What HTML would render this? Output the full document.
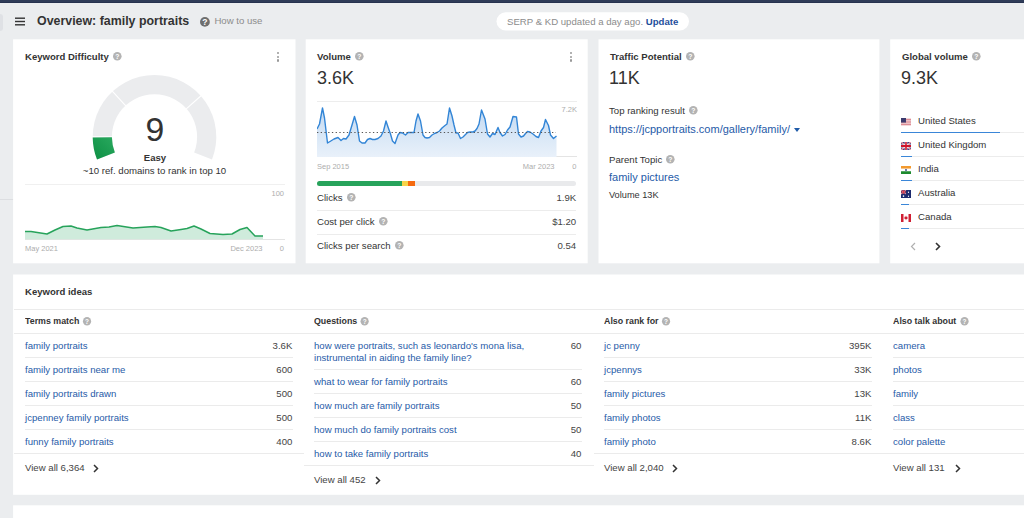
<!DOCTYPE html>
<html lang="en">
<head>
<meta charset="utf-8">
<title>Overview: family portraits</title>
<style>
*{box-sizing:border-box;margin:0;padding:0}
html,body{width:1024px;height:518px;overflow:hidden}
body{background:#ebedef;font-family:"Liberation Sans",Arial,sans-serif;color:#333;font-size:12px;position:relative}
.abs{position:absolute;white-space:nowrap}
.card{position:absolute}
.h1{font-size:12.4px;font-weight:bold;color:#333}
.ttl{font-size:9.55px;font-weight:bold;color:#333;transform:scaleX(1.0);transform-origin:0 50%}
.big{font-size:18px;color:#333}
.q{display:inline-block;border-radius:50%;color:#fff;font-size:7px;font-weight:bold;text-align:center;vertical-align:middle;position:relative}
.tiny{font-size:7.5px;color:#adadad}
.row{position:absolute;height:1px}
.kw{font-size:9.62px;color:#333;transform:scaleX(1.0);transform-origin:0 50%}
.num{font-size:9.62px;color:#444;text-align:right;transform:scaleX(1.0);transform-origin:100% 50%}
.ctr{transform-origin:50% 50%}
.th{font-size:9.3px;transform:scaleX(.95);transform-origin:0 50%}
.row2{position:absolute;height:1px;background:#ebebeb}
.link{color:#1f5ba8}
.dots{position:absolute;width:2px}
.dots i{display:block;width:2.2px;height:2.2px;background:#999;border-radius:50%;margin-bottom:1.5px}
</style>
</head>
<body>
<div class="abs" style="left:0;top:0;width:1024px;height:3px;background:linear-gradient(#2f3c58 0,#2f3c58 55%,#27334f 56%,#27334f 100%)"></div>
<div class="abs" style="left:0;top:14px;width:3px;height:17px;background:#dfe1e5;border-radius:0 3px 3px 0"></div>
<div class="abs" style="left:0;top:199px;width:14px;height:1px;background:#dcdee1"></div>

<svg class="abs" style="left:0;top:0" width="1024" height="518" viewBox="0 0 1024 518"><g fill="#fff"><rect x="13.100" y="39.300" width="282.400" height="224"/><rect x="305.700" y="39.300" width="282" height="224"/><rect x="598.500" y="39.300" width="280.900" height="224"/><rect x="890.200" y="39.300" width="140" height="224"/><rect x="13.100" y="274.500" width="1020" height="220.300"/><rect x="13.100" y="505.300" width="1020" height="20"/><rect x="496.500" y="12.200" width="192.500" height="18.300" rx="9.150"/></g></svg>

<svg class="abs" style="left:15px;top:16.500px" width="10" height="9" viewBox="0 0 10 9"><rect x="0" y="0.500" width="10" height="1.400" fill="#333"/><rect x="0" y="3.800" width="10" height="1.400" fill="#333"/><rect x="0" y="7.100" width="10" height="1.400" fill="#333"/></svg>
<div class="abs h1" style="left:37px;top:14.300px">Overview: family portraits</div>
<div class="abs kw" style="left:199.600px;top:15.200px;color:#8c8c8c"><svg width="9.8" height="9.8" viewBox="0 0 9.8 9.8" style="display:inline-block;vertical-align:middle;position:relative;top:-0.2px;margin-left:0px;overflow:visible"><circle cx="4.9" cy="4.9" r="4.9" fill="#6e6e6e"/><text x="4.9" y="8.00" font-size="8.6" font-weight="bold" fill="#fff" text-anchor="middle" font-family="Liberation Sans, Arial, sans-serif">?</text></svg><span style="margin-left:5px">How to use</span></div>
<div class="abs kw" style="left:507px;top:15.500px;color:#8c8c8c">SERP &amp; KD updated a day ago. <b style="color:#1f4f9c">Update</b></div>
<div class="card" style="left:14px;top:40px;width:281px;height:223px">
<div class="abs ttl" style="left:11px;top:11px">Keyword Difficulty<svg width="8.6" height="8.6" viewBox="0 0 8.6 8.6" style="display:inline-block;vertical-align:middle;position:relative;top:-0.8px;margin-left:4px;overflow:visible"><circle cx="4.3" cy="4.3" r="4.3" fill="#b3b3b3"/><text x="4.3" y="6.75" font-size="6.8" font-weight="bold" fill="#fff" text-anchor="middle" font-family="Liberation Sans, Arial, sans-serif">?</text></svg></div>
<div class="dots" style="left:263px;top:12px"><i></i><i></i><i></i></div>
<svg class="abs" style="left:0;top:0" width="281" height="140" viewBox="0 0 281 140"><defs><linearGradient id="gg" x1="0" y1="1" x2="1" y2="0"><stop offset="0" stop-color="#0c8f43"/><stop offset="1" stop-color="#2aa95f"/></linearGradient></defs><path d="M83.00 119.45A61.8 61.8 0 1 1 198.00 119.45L180.14 112.41A42.6 42.6 0 1 0 100.86 112.41Z" fill="#ebecee"/><line x1="77.70" y1="96.80" x2="98.90" y2="96.80" stroke="#fff" stroke-width="1.1"/><line x1="97.83" y1="50.72" x2="112.24" y2="66.28" stroke="#fff" stroke-width="1.1"/><line x1="187.61" y1="55.27" x2="171.70" y2="69.29" stroke="#fff" stroke-width="1.1"/><path d="M83.00 119.45A61.8 61.8 0 0 1 78.70 97.45L97.90 97.25A42.6 42.6 0 0 0 100.86 112.41Z" fill="url(#gg)"/></svg>
<div class="abs" style="left:100.500px;width:81px;top:70.200px;text-align:center;font-size:33.75px;color:#333">9</div>
<div class="abs ttl ctr" style="left:100.500px;width:81px;top:111.700px;text-align:center">Easy</div>
<div class="abs kw ctr" style="left:0;width:281px;top:124.500px;text-align:center">~10 ref. domains to rank in top 10</div>
<div class="row" style="left:11px;top:144px;width:259.5px;background:#f0f0f0"></div>
<div class="row" style="left:11px;top:199px;width:259.5px;background:#e4e4e4"></div>
<svg class="abs" style="left:11px;top:145.700px" width="240" height="54" viewBox="0 0 240 54"><path d="M0 45.5 L6 45.5 L22 48 L30 44 L38 40.5 L46 40 L52 42 L62 44 L76 41.5 L84 41 L92 39.5 L108 42 L122 41 L130 40.5 L136 41.5 L146 45 L156 43.5 L162 42.5 L169 40 L176 43 L185 47.5 L198 48.5 L207 48 L215 43.5 L222 41.5 L230 50 L238 50L238 53.300L0 53.300Z" fill="#cfebdc"/><path d="M0 45.5 L6 45.5 L22 48 L30 44 L38 40.5 L46 40 L52 42 L62 44 L76 41.5 L84 41 L92 39.5 L108 42 L122 41 L130 40.5 L136 41.5 L146 45 L156 43.5 L162 42.5 L169 40 L176 43 L185 47.5 L198 48.5 L207 48 L215 43.5 L222 41.5 L230 50 L238 50" fill="none" stroke="#27a35b" stroke-width="1.500" stroke-linejoin="round"/></svg>
<div class="abs tiny" style="right:11px;top:148.500px">100</div>
<div class="abs tiny" style="left:11px;top:203.500px">May 2021</div>
<div class="abs tiny" style="right:32.500px;top:203.500px">Dec 2023</div>
<div class="abs tiny" style="right:11px;top:203.500px">0</div>
</div>
<div class="card" style="left:307px;top:40px;width:280px;height:223px">
<div class="abs ttl" style="left:10px;top:11px">Volume<svg width="8.6" height="8.6" viewBox="0 0 8.6 8.6" style="display:inline-block;vertical-align:middle;position:relative;top:-0.8px;margin-left:4px;overflow:visible"><circle cx="4.3" cy="4.3" r="4.3" fill="#b3b3b3"/><text x="4.3" y="6.75" font-size="6.8" font-weight="bold" fill="#fff" text-anchor="middle" font-family="Liberation Sans, Arial, sans-serif">?</text></svg></div>
<div class="dots" style="left:263px;top:12px"><i></i><i></i><i></i></div>
<div class="abs big" style="left:10px;top:28px">3.6K</div>
<div class="row" style="left:10px;top:61px;width:259.5px;background:#ededed"></div>
<div class="row" style="left:10px;top:116px;width:259.5px;background:#e4e4e4"></div>
<svg class="abs" style="left:10px;top:60px" width="240" height="57" viewBox="0 0 240 57"><defs><linearGradient id="vg" x1="0" y1="0" x2="0" y2="1"><stop offset="0" stop-color="#c3daf2"/><stop offset="1" stop-color="#e9f1fa"/></linearGradient></defs><path d="M0 29 L2.5 24 L5.5 8 L7.5 18 L10.5 43 L13 41.5 L17 39 L21 37.5 L24 40.5 L26.5 38.5 L29 39 L32 35 L35 25 L37.5 16.5 L40 25 L42.5 41 L45 43 L48 43 L50.5 39.5 L53 38.5 L55.5 39.5 L58 39.5 L61 38.5 L64 36 L66.5 31 L69 21 L71 27 L73.5 34 L75.5 41 L78 43.5 L81 35 L83 32.5 L85.5 33 L88.5 35 L91 32.5 L94 32.5 L97 32.5 L99 21 L101 14 L103.5 21 L106 35 L108 37.5 L110 38 L112.5 37.5 L115 35 L117.5 33.5 L120 32.5 L122.5 31 L125 28 L128 25.5 L130 24 L132.5 8 L135 16 L137 25 L139 33 L141 33 L143.5 38.5 L146 37 L148 35 L150.5 32.5 L153 32 L156 32 L158 31 L160 28.5 L162 24 L164.5 10 L168 19 L170.5 34 L173 37 L175.5 33.5 L178 34.5 L181 27.5 L183 32.5 L185.5 36 L188 34.5 L190.5 30 L193 27 L196 16.5 L199.5 17 L201.5 34 L204 37 L206.5 36 L208.5 33.5 L210.5 31.5 L213 32 L216 34 L219 36.5 L221.5 37.5 L224 31 L226.5 27.5 L228.5 19.5 L231.5 25.5 L233.5 35 L236.5 38.5 L239.5 36L239.500 57L0 57Z" fill="url(#vg)"/><path d="M0 29 L2.5 24 L5.5 8 L7.5 18 L10.5 43 L13 41.5 L17 39 L21 37.5 L24 40.5 L26.5 38.5 L29 39 L32 35 L35 25 L37.5 16.5 L40 25 L42.5 41 L45 43 L48 43 L50.5 39.5 L53 38.5 L55.5 39.5 L58 39.5 L61 38.5 L64 36 L66.5 31 L69 21 L71 27 L73.5 34 L75.5 41 L78 43.5 L81 35 L83 32.5 L85.5 33 L88.5 35 L91 32.5 L94 32.5 L97 32.5 L99 21 L101 14 L103.5 21 L106 35 L108 37.5 L110 38 L112.5 37.5 L115 35 L117.5 33.5 L120 32.5 L122.5 31 L125 28 L128 25.5 L130 24 L132.5 8 L135 16 L137 25 L139 33 L141 33 L143.5 38.5 L146 37 L148 35 L150.5 32.5 L153 32 L156 32 L158 31 L160 28.5 L162 24 L164.5 10 L168 19 L170.5 34 L173 37 L175.5 33.5 L178 34.5 L181 27.5 L183 32.5 L185.5 36 L188 34.5 L190.5 30 L193 27 L196 16.5 L199.5 17 L201.5 34 L204 37 L206.5 36 L208.5 33.5 L210.5 31.5 L213 32 L216 34 L219 36.5 L221.5 37.5 L224 31 L226.5 27.5 L228.5 19.5 L231.5 25.5 L233.5 35 L236.5 38.5 L239.5 36" fill="none" stroke="#3285d6" stroke-width="1.400" stroke-linejoin="round"/><line x1="0" y1="32.500" x2="239" y2="32.500" stroke="#555" stroke-width="1" stroke-dasharray="1.300 2.430"/></svg>
<div class="abs tiny" style="right:10px;top:65px">7.2K</div>
<div class="abs tiny" style="left:10px;top:121.500px">Sep 2015</div>
<div class="abs tiny" style="right:32.500px;top:121.500px">Mar 2023</div>
<div class="abs tiny" style="right:10.500px;top:121.500px">0</div>
<div class="abs" style="left:10px;top:141px;width:259px;height:5px;border-radius:3px;background:#e9eaec;overflow:hidden"><div class="abs" style="left:0;top:0;width:86px;height:5px;background:#27a35b"></div><div class="abs" style="left:85px;top:0;width:6px;height:5px;background:#f7d34a"></div><div class="abs" style="left:91px;top:0;width:7px;height:5px;background:#f56a0f"></div></div>
<div class="abs kw " style="left:10px;top:152px;">Clicks<svg width="8.6" height="8.6" viewBox="0 0 8.6 8.6" style="display:inline-block;vertical-align:middle;position:relative;top:-0.8px;margin-left:4px;overflow:visible"><circle cx="4.3" cy="4.3" r="4.3" fill="#b3b3b3"/><text x="4.3" y="6.75" font-size="6.8" font-weight="bold" fill="#fff" text-anchor="middle" font-family="Liberation Sans, Arial, sans-serif">?</text></svg></div>
<div class="abs num" style="left:189.2px;width:80px;top:152px">1.9K</div>
<div class="row" style="left:10px;top:170px;width:259px;background:#ececec"></div>
<div class="abs kw " style="left:10px;top:176px;">Cost per click<svg width="8.6" height="8.6" viewBox="0 0 8.6 8.6" style="display:inline-block;vertical-align:middle;position:relative;top:-0.8px;margin-left:4px;overflow:visible"><circle cx="4.3" cy="4.3" r="4.3" fill="#b3b3b3"/><text x="4.3" y="6.75" font-size="6.8" font-weight="bold" fill="#fff" text-anchor="middle" font-family="Liberation Sans, Arial, sans-serif">?</text></svg></div>
<div class="abs num" style="left:189.2px;width:80px;top:176px">$1.20</div>
<div class="row" style="left:10px;top:194px;width:259px;background:#ececec"></div>
<div class="abs kw " style="left:10px;top:200px;">Clicks per search<svg width="8.6" height="8.6" viewBox="0 0 8.6 8.6" style="display:inline-block;vertical-align:middle;position:relative;top:-0.8px;margin-left:4px;overflow:visible"><circle cx="4.3" cy="4.3" r="4.3" fill="#b3b3b3"/><text x="4.3" y="6.75" font-size="6.8" font-weight="bold" fill="#fff" text-anchor="middle" font-family="Liberation Sans, Arial, sans-serif">?</text></svg></div>
<div class="abs num" style="left:189.2px;width:80px;top:200px">0.54</div>
</div>
<div class="card" style="left:599px;top:40px;width:280px;height:223px">
<div class="abs ttl" style="left:11px;top:11px">Traffic Potential<svg width="8.6" height="8.6" viewBox="0 0 8.6 8.6" style="display:inline-block;vertical-align:middle;position:relative;top:-0.8px;margin-left:4px;overflow:visible"><circle cx="4.3" cy="4.3" r="4.3" fill="#b3b3b3"/><text x="4.3" y="6.75" font-size="6.8" font-weight="bold" fill="#fff" text-anchor="middle" font-family="Liberation Sans, Arial, sans-serif">?</text></svg></div>
<div class="abs big" style="left:10px;top:28px">11K</div>
<div class="abs kw " style="left:10px;top:65px;">Top ranking result<svg width="8.6" height="8.6" viewBox="0 0 8.6 8.6" style="display:inline-block;vertical-align:middle;position:relative;top:-0.8px;margin-left:4px;overflow:visible"><circle cx="4.3" cy="4.3" r="4.3" fill="#b3b3b3"/><text x="4.3" y="6.75" font-size="6.8" font-weight="bold" fill="#fff" text-anchor="middle" font-family="Liberation Sans, Arial, sans-serif">?</text></svg></div>
<div class="abs link" style="left:10px;top:82.500px;font-size:11px">https://jcpportraits.com/gallery/family/ <span style="display:inline-block;width:0;height:0;border-left:3.200px solid transparent;border-right:3.200px solid transparent;border-top:4px solid #1f5ba8;vertical-align:middle;margin-left:1px"></span></div>
<div class="abs kw " style="left:10px;top:113.5px;">Parent Topic<svg width="8.6" height="8.6" viewBox="0 0 8.6 8.6" style="display:inline-block;vertical-align:middle;position:relative;top:-0.8px;margin-left:4px;overflow:visible"><circle cx="4.3" cy="4.3" r="4.3" fill="#b3b3b3"/><text x="4.3" y="6.75" font-size="6.8" font-weight="bold" fill="#fff" text-anchor="middle" font-family="Liberation Sans, Arial, sans-serif">?</text></svg></div>
<div class="abs link" style="left:10px;top:131.400px;font-size:11px">family pictures</div>
<div class="abs" style="left:10px;top:150.400px;font-size:9.2px;color:#333">Volume 13K</div>
</div>
<div class="card" style="left:891px;top:40px;width:140px;height:223px">
<div class="abs ttl" style="left:11px;top:11px">Global volume<svg width="8.6" height="8.6" viewBox="0 0 8.6 8.6" style="display:inline-block;vertical-align:middle;position:relative;top:-0.8px;margin-left:4px;overflow:visible"><circle cx="4.3" cy="4.3" r="4.3" fill="#b3b3b3"/><text x="4.3" y="6.75" font-size="6.8" font-weight="bold" fill="#fff" text-anchor="middle" font-family="Liberation Sans, Arial, sans-serif">?</text></svg></div>
<div class="abs big" style="left:10px;top:28px">9.3K</div>
<div class="abs kw " style="left:27px;top:75px;">United States</div>
<div class="row" style="left:10px;top:92px;width:130px;background:#ececec"></div>
<div class="abs" style="left:10px;top:91.7px;width:99px;height:1.400px;background:#3a86d8"></div>
<svg class="abs" style="left:10px;top:77.9px" width="10" height="8" viewBox="0 0 10 7" preserveAspectRatio="none"><rect width="10" height="7" fill="#f3d9dc"/><rect y="1" width="10" height="1" fill="#d9808a"/><rect y="3" width="10" height="1" fill="#d9808a"/><rect y="5" width="10" height="1" fill="#d9808a"/><rect width="5" height="4" fill="#3c3b6e"/></svg>
<div class="abs kw " style="left:27px;top:99px;">United Kingdom</div>
<div class="row" style="left:10px;top:116px;width:130px;background:#ececec"></div>
<div class="abs" style="left:10px;top:115.7px;width:10.8px;height:1.400px;background:#3a86d8"></div>
<svg class="abs" style="left:10px;top:101.9px" width="10" height="8" viewBox="0 0 10 7" preserveAspectRatio="none"><rect width="10" height="7" fill="#2b3a80"/><path d="M0 0L10 7M10 0L0 7" stroke="#e8a0a8" stroke-width="1.400"/><path d="M5 0V7M0 3.500H10" stroke="#fff" stroke-width="2.600"/><path d="M5 0V7M0 3.500H10" stroke="#cf142b" stroke-width="1.600"/></svg>
<div class="abs kw " style="left:27px;top:123px;">India</div>
<div class="row" style="left:10px;top:140px;width:130px;background:#ececec"></div>
<div class="abs" style="left:10px;top:139.7px;width:10.5px;height:1.400px;background:#3a86d8"></div>
<svg class="abs" style="left:10px;top:125.9px" width="10" height="8" viewBox="0 0 10 7" preserveAspectRatio="none"><rect width="10" height="2.400" fill="#f39a2e"/><rect y="2.400" width="10" height="2.200" fill="#fff"/><rect y="4.600" width="10" height="2.400" fill="#1d8a2e"/><circle cx="5" cy="3.500" r="0.900" fill="#2b3a80"/></svg>
<div class="abs kw " style="left:27px;top:147px;">Australia</div>
<div class="row" style="left:10px;top:164px;width:130px;background:#ececec"></div>
<div class="abs" style="left:10px;top:163.7px;width:8.3px;height:1.400px;background:#3a86d8"></div>
<svg class="abs" style="left:10px;top:149.9px" width="10" height="8" viewBox="0 0 10 7" preserveAspectRatio="none"><rect width="10" height="7" fill="#1c2a6e"/><path d="M0 0L5 3.500M5 0L0 3.500" stroke="#e58a95" stroke-width="0.900"/><path d="M2.500 0V3.500M0 1.750H5" stroke="#d8394a" stroke-width="0.900"/><circle cx="7.500" cy="2" r="0.600" fill="#fff"/><circle cx="7.500" cy="5.500" r="0.600" fill="#fff"/><circle cx="2.500" cy="5.300" r="0.800" fill="#fff"/></svg>
<div class="abs kw " style="left:27px;top:171px;">Canada</div>
<div class="row" style="left:10px;top:188px;width:130px;background:#ececec"></div>
<div class="abs" style="left:10px;top:187.7px;width:8.3px;height:1.400px;background:#3a86d8"></div>
<svg class="abs" style="left:10px;top:173.9px" width="10" height="8" viewBox="0 0 10 7" preserveAspectRatio="none"><rect width="10" height="7" fill="#fff"/><rect width="2.500" height="7" fill="#cf1f33"/><rect x="7.500" width="2.500" height="7" fill="#cf1f33"/><path d="M5 1.300L5.700 2.600L6.700 2.500L6.300 3.700L6.800 4.200L5.300 4.700L5 5.700L4.700 4.700L3.200 4.200L3.700 3.700L3.300 2.500L4.300 2.600Z" fill="#cf1f33"/></svg>
<svg class="abs" style="left:19px;top:201.5px" width="6" height="9" viewBox="0 0 6 9"><path d="M5 1L1.5 4.500L5 8" fill="none" stroke="#b0b0b0" stroke-width="1.2"/></svg>
<svg class="abs" style="left:44px;top:201.5px" width="6" height="9" viewBox="0 0 6 9"><path d="M1 1L4.500 4.500L1 8" fill="none" stroke="#333" stroke-width="1.6"/></svg>
</div>
<div class="card" style="left:14px;top:275.500px;width:1020px;height:219px">
<div class="abs ttl" style="left:11px;top:10px">Keyword ideas</div>
<div class="row2" style="left:0px;top:33px;width:1020px"></div>
<div class="abs ttl th" style="left:11px;top:40.7px">Terms match<svg width="8.6" height="8.6" viewBox="0 0 8.6 8.6" style="display:inline-block;vertical-align:middle;position:relative;top:-0.8px;margin-left:4px;overflow:visible"><circle cx="4.3" cy="4.3" r="4.3" fill="#b3b3b3"/><text x="4.3" y="6.75" font-size="6.8" font-weight="bold" fill="#fff" text-anchor="middle" font-family="Liberation Sans, Arial, sans-serif">?</text></svg></div>
<div class="row2" style="left:0px;top:57px;width:290px"></div>
<div class="abs kw link" style="left:11px;top:64px;">family portraits</div>
<div class="abs num" style="left:198.39999999999998px;width:80px;top:64px">3.6K</div>
<div class="row2" style="left:11px;top:81px;width:268px"></div>
<div class="abs kw link" style="left:11px;top:88px;">family portraits near me</div>
<div class="abs num" style="left:198.39999999999998px;width:80px;top:88px">600</div>
<div class="row2" style="left:11px;top:105px;width:268px"></div>
<div class="abs kw link" style="left:11px;top:112px;">family portraits drawn</div>
<div class="abs num" style="left:198.39999999999998px;width:80px;top:112px">500</div>
<div class="row2" style="left:11px;top:129px;width:268px"></div>
<div class="abs kw link" style="left:11px;top:136px;">jcpenney family portraits</div>
<div class="abs num" style="left:198.39999999999998px;width:80px;top:136px">500</div>
<div class="row2" style="left:11px;top:153px;width:268px"></div>
<div class="abs kw link" style="left:11px;top:160px;">funny family portraits</div>
<div class="abs num" style="left:198.39999999999998px;width:80px;top:160px">400</div>
<div class="row2" style="left:0px;top:177px;width:290px"></div>
<div class="abs kw " style="left:11px;top:186.6px;color:#444;">View all 6,364</div>
<svg class="abs" style="left:79px;top:188px" width="6" height="9" viewBox="0 0 6 9"><path d="M1 1L4.500 4.500L1 8" fill="none" stroke="#333" stroke-width="1.5"/></svg>
<div class="abs ttl th" style="left:300px;top:40.7px">Questions<svg width="8.6" height="8.6" viewBox="0 0 8.6 8.6" style="display:inline-block;vertical-align:middle;position:relative;top:-0.8px;margin-left:4px;overflow:visible"><circle cx="4.3" cy="4.3" r="4.3" fill="#b3b3b3"/><text x="4.3" y="6.75" font-size="6.8" font-weight="bold" fill="#fff" text-anchor="middle" font-family="Liberation Sans, Arial, sans-serif">?</text></svg></div>
<div class="row2" style="left:290px;top:57px;width:290px"></div>
<div class="abs kw link" style="left:300px;top:64px;line-height:12px;">how were portraits, such as leonardo's mona lisa,<br>instrumental in aiding the family line?</div>
<div class="abs num" style="left:487.4px;width:80px;top:64px">60</div>
<div class="row2" style="left:300px;top:93px;width:268px"></div>
<div class="abs kw link" style="left:300px;top:100px;">what to wear for family portraits</div>
<div class="abs num" style="left:487.4px;width:80px;top:100px">60</div>
<div class="row2" style="left:300px;top:117px;width:268px"></div>
<div class="abs kw link" style="left:300px;top:124px;">how much are family portraits</div>
<div class="abs num" style="left:487.4px;width:80px;top:124px">50</div>
<div class="row2" style="left:300px;top:141px;width:268px"></div>
<div class="abs kw link" style="left:300px;top:148px;">how much do family portraits cost</div>
<div class="abs num" style="left:487.4px;width:80px;top:148px">50</div>
<div class="row2" style="left:300px;top:165px;width:268px"></div>
<div class="abs kw link" style="left:300px;top:172px;">how to take family portraits</div>
<div class="abs num" style="left:487.4px;width:80px;top:172px">40</div>
<div class="row2" style="left:290px;top:189px;width:290px"></div>
<div class="abs kw " style="left:300px;top:198.6px;color:#444;">View all 452</div>
<svg class="abs" style="left:361px;top:200px" width="6" height="9" viewBox="0 0 6 9"><path d="M1 1L4.500 4.500L1 8" fill="none" stroke="#333" stroke-width="1.5"/></svg>
<div class="abs ttl th" style="left:590px;top:40.7px">Also rank for<svg width="8.6" height="8.6" viewBox="0 0 8.6 8.6" style="display:inline-block;vertical-align:middle;position:relative;top:-0.8px;margin-left:4px;overflow:visible"><circle cx="4.3" cy="4.3" r="4.3" fill="#b3b3b3"/><text x="4.3" y="6.75" font-size="6.8" font-weight="bold" fill="#fff" text-anchor="middle" font-family="Liberation Sans, Arial, sans-serif">?</text></svg></div>
<div class="row2" style="left:580px;top:57px;width:290px"></div>
<div class="abs kw link" style="left:590px;top:64px;">jc penny</div>
<div class="abs num" style="left:777.4px;width:80px;top:64px">395K</div>
<div class="row2" style="left:590px;top:81px;width:268px"></div>
<div class="abs kw link" style="left:590px;top:88px;">jcpennys</div>
<div class="abs num" style="left:777.4px;width:80px;top:88px">33K</div>
<div class="row2" style="left:590px;top:105px;width:268px"></div>
<div class="abs kw link" style="left:590px;top:112px;">family pictures</div>
<div class="abs num" style="left:777.4px;width:80px;top:112px">13K</div>
<div class="row2" style="left:590px;top:129px;width:268px"></div>
<div class="abs kw link" style="left:590px;top:136px;">family photos</div>
<div class="abs num" style="left:777.4px;width:80px;top:136px">11K</div>
<div class="row2" style="left:590px;top:153px;width:268px"></div>
<div class="abs kw link" style="left:590px;top:160px;">family photo</div>
<div class="abs num" style="left:777.4px;width:80px;top:160px">8.6K</div>
<div class="row2" style="left:580px;top:177px;width:290px"></div>
<div class="abs kw " style="left:590px;top:186.6px;color:#444;">View all 2,040</div>
<svg class="abs" style="left:658px;top:188px" width="6" height="9" viewBox="0 0 6 9"><path d="M1 1L4.500 4.500L1 8" fill="none" stroke="#333" stroke-width="1.5"/></svg>
<div class="abs ttl th" style="left:879px;top:40.7px">Also talk about<svg width="8.6" height="8.6" viewBox="0 0 8.6 8.6" style="display:inline-block;vertical-align:middle;position:relative;top:-0.8px;margin-left:4px;overflow:visible"><circle cx="4.3" cy="4.3" r="4.3" fill="#b3b3b3"/><text x="4.3" y="6.75" font-size="6.8" font-weight="bold" fill="#fff" text-anchor="middle" font-family="Liberation Sans, Arial, sans-serif">?</text></svg></div>
<div class="row2" style="left:870px;top:57px;width:150px"></div>
<div class="abs kw link" style="left:879px;top:64px;">camera</div>
<div class="row2" style="left:879px;top:81px;width:150px"></div>
<div class="abs kw link" style="left:879px;top:88px;">photos</div>
<div class="row2" style="left:879px;top:105px;width:150px"></div>
<div class="abs kw link" style="left:879px;top:112px;">family</div>
<div class="row2" style="left:879px;top:129px;width:150px"></div>
<div class="abs kw link" style="left:879px;top:136px;">class</div>
<div class="row2" style="left:879px;top:153px;width:150px"></div>
<div class="abs kw link" style="left:879px;top:160px;">color palette</div>
<div class="row2" style="left:870px;top:177px;width:150px"></div>
<div class="abs kw " style="left:879px;top:186.6px;color:#444;">View all 131</div>
<svg class="abs" style="left:941px;top:188px" width="6" height="9" viewBox="0 0 6 9"><path d="M1 1L4.500 4.500L1 8" fill="none" stroke="#333" stroke-width="1.5"/></svg>
</div>
</body></html>
